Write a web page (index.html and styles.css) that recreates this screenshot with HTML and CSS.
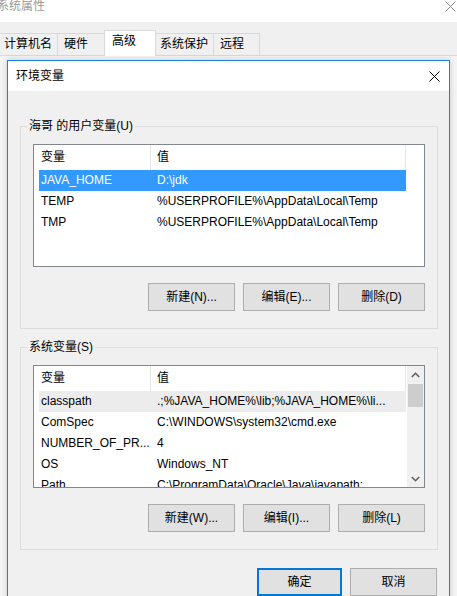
FILE: index.html
```html
<!DOCTYPE html>
<html lang="zh-CN">
<head>
<meta charset="utf-8">
<title>环境变量</title>
<link rel="stylesheet" href="styles.css">
</head>
<body>
<div class="screen">
  <div class="bw-title">
    <span class="bw-title-text">系统属性</span>
    <svg class="bw-close" width="11" height="11" viewBox="0 0 11 11"><path d="M0.5 0.5L10.5 10.5M10.5 0.5L0.5 10.5" stroke="#8c8c8c" stroke-width="1" fill="none"/></svg>
  </div>
  <div class="tabs">
    <div class="tab t1">计算机名</div>
    <div class="tab t2">硬件</div>
    <div class="tab t3 active">高级</div>
    <div class="tab t4">系统保护</div>
    <div class="tab t5">远程</div>
  </div>
  <div class="tabpage"></div>

  <div class="dialog">
    <div class="dlg-title">
      <span class="dlg-title-text">环境变量</span>
      <svg class="dlg-close" width="11" height="11" viewBox="0 0 11 11"><path d="M0.5 0.5L10.5 10.5M10.5 0.5L0.5 10.5" stroke="#000" stroke-width="1" fill="none"/></svg>
    </div>
    <div class="dlg-body">
      <fieldset class="group">
        <legend>海哥 的用户变量(U)</legend>
        <div class="listview">
          <div class="lv-content">
            <div class="lv-header">
              <div class="lv-hcell c1">变量</div>
              <div class="lv-hcell c2">值</div>
            </div>
            <div class="lv-row selected"><span class="cell">JAVA_HOME</span><span class="cell">D:\jdk</span></div>
            <div class="lv-row"><span class="cell">TEMP</span><span class="cell">%USERPROFILE%\AppData\Local\Temp</span></div>
            <div class="lv-row"><span class="cell">TMP</span><span class="cell">%USERPROFILE%\AppData\Local\Temp</span></div>
          </div>
        </div>
        <div class="btn-row">
          <button class="btn">新建(N)...</button>
          <button class="btn">编辑(E)...</button>
          <button class="btn">删除(D)</button>
        </div>
      </fieldset>

      <fieldset class="group group2">
        <legend>系统变量(S)</legend>
        <div class="listview">
          <div class="lv-content">
            <div class="lv-header">
              <div class="lv-hcell c1">变量</div>
              <div class="lv-hcell c2">值</div>
            </div>
            <div class="lv-row inactive"><span class="cell">classpath</span><span class="cell">.;%JAVA_HOME%\lib;%JAVA_HOME%\li...</span></div>
            <div class="lv-row"><span class="cell">ComSpec</span><span class="cell">C:\WINDOWS\system32\cmd.exe</span></div>
            <div class="lv-row"><span class="cell">NUMBER_OF_PR...</span><span class="cell">4</span></div>
            <div class="lv-row"><span class="cell">OS</span><span class="cell">Windows_NT</span></div>
            <div class="lv-row"><span class="cell">Path</span><span class="cell">C:\ProgramData\Oracle\Java\javapath;</span></div>
          </div>
          <div class="scrollbar">
            <div class="sb-arrow">
              <svg width="9" height="6" viewBox="0 0 9 6"><path d="M0.8 5L4.5 1.3L8.2 5" stroke="#606060" stroke-width="1.6" fill="none"/></svg>
            </div>
            <div class="sb-thumb"></div>
            <div class="sb-track"></div>
            <div class="sb-arrow">
              <svg width="9" height="6" viewBox="0 0 9 6"><path d="M0.8 1L4.5 4.7L8.2 1" stroke="#606060" stroke-width="1.6" fill="none"/></svg>
            </div>
          </div>
        </div>
        <div class="btn-row">
          <button class="btn">新建(W)...</button>
          <button class="btn">编辑(I)...</button>
          <button class="btn">删除(L)</button>
        </div>
      </fieldset>

      <div class="dlg-buttons">
        <button class="btn default">确定</button>
        <button class="btn">取消</button>
      </div>
    </div>
  </div>
</div>
</body>
</html>
```

FILE: styles.css
```css
* { box-sizing: border-box; }

html, body {
  margin: 0;
  padding: 0;
}

body {
  width: 457px;
  height: 596px;
  overflow: hidden;
  font-family: "Liberation Sans", "Noto Sans CJK SC", sans-serif;
  font-size: 12px;
  color: #000;
}

.screen {
  position: relative;
  width: 457px;
  height: 596px;
  overflow: hidden;
  background: #f0f0f0;
}

/* background window */
.bw-title {
  height: 22px;
  background: #fff;
  display: flex;
  align-items: flex-start;
  justify-content: space-between;
}

.bw-title-text {
  margin-left: -3px;
  line-height: 13px;
  color: #9a9a9a;
}

.bw-close {
  margin-top: 1px;
  margin-right: 1px;
}

.tabs {
  display: flex;
  align-items: flex-end;
  margin-top: 11px;
  height: 22px;
  margin-left: -3px;
}

.tab {
  height: 22px;
  line-height: 21px;
  padding-left: 6px;
  border: 1px solid #d9d9d9;
  border-bottom: none;
  margin-right: -1px;
  background: #f0f0f0;
  white-space: nowrap;
}

.t1 { width: 61px; }
.t2 { width: 48px; }
.t3 { width: 52px; padding-left: 7px; }
.t4 { width: 59px; padding-left: 4px; }
.t5 { width: 47px; }

.tab.active {
  height: 26px;
  margin-bottom: -1px;
  line-height: 20px;
  background: #fff;
  position: relative;
  z-index: 1;
}

.tabpage {
  height: 600px;
  border-top: 1px solid #d9d9d9;
  background: #f4f4f4;
}

/* dialog */
.dialog {
  position: absolute;
  left: 7px;
  top: 60px;
  width: 443px;
  height: 560px;
  border: 1px solid #1883d7;
  background: #f0f0f0;
  box-shadow: 0 0 6px rgba(0, 0, 0, 0.18);
  z-index: 2;
}

.dlg-title {
  height: 30px;
  background: #fff;
  display: flex;
  align-items: center;
  justify-content: space-between;
  padding-left: 8px;
  padding-right: 9px;
}

.dlg-title-text {
  line-height: 16px;
  margin-top: -1px;
}

.dlg-body {
  padding: 27px 11px 0 12px;
}

.group {
  margin: 0;
  border: 1px solid #dcdcdc;
  padding: 10px 12px 17px 12px;
  min-width: 0;
}

.group legend {
  padding: 0 2px;
  margin-left: -6px;
  line-height: 16px;
  height: 16px;
}

.group2 {
  margin-top: 10px;
}

.listview {
  height: 123px;
  border: 1px solid #828790;
  background: #fff;
  display: flex;
  overflow: hidden;
}

.lv-content {
  flex: 1;
  min-width: 0;
  overflow: hidden;
}

.lv-header {
  display: flex;
  height: 25px;
}

.lv-hcell {
  line-height: 25px;
  border-right: 1px solid #e5e5e5;
  white-space: nowrap;
}

.lv-hcell.c1 {
  width: 117px;
  padding-left: 7px;
}

.lv-hcell.c2 {
  width: 255px;
  padding-left: 6px;
}

.lv-row {
  display: grid;
  grid-template-columns: 118px 249px;
  margin-left: 5px;
  width: 367px;
  height: 21px;
  line-height: 21px;
  white-space: nowrap;
}

.lv-row .cell {
  overflow: hidden;
}

.lv-row .cell:first-child {
  padding-left: 2px;
}

.lv-row.selected {
  background: #3399ff;
  color: #fff;
}

.lv-row.inactive {
  background: #ececec;
}

.scrollbar {
  width: 17px;
  flex: none;
  background: #f0f0f0;
  display: flex;
  flex-direction: column;
}

.sb-arrow {
  height: 17px;
  display: flex;
  align-items: center;
  justify-content: center;
  flex: none;
}

.sb-thumb {
  height: 23px;
  margin: 1px 1px 0 1px;
  background: #cdcdcd;
  flex: none;
}

.sb-track {
  flex: 1;
}

.btn-row {
  display: flex;
  justify-content: flex-end;
  gap: 8px;
  margin-top: 16px;
}

.btn {
  width: 87px;
  height: 28px;
  padding: 0;
  margin: 0;
  font: inherit;
  color: #000;
  background: #e1e1e1;
  border: 1px solid #adadad;
  border-radius: 0;
  line-height: 26px;
}

.btn.default {
  width: 85px;
  border: 2px solid #0078d7;
  line-height: 24px;
}

.dlg-buttons {
  display: flex;
  justify-content: flex-end;
  gap: 8px;
  margin-top: 18px;
  padding-right: 1px;
}
```
